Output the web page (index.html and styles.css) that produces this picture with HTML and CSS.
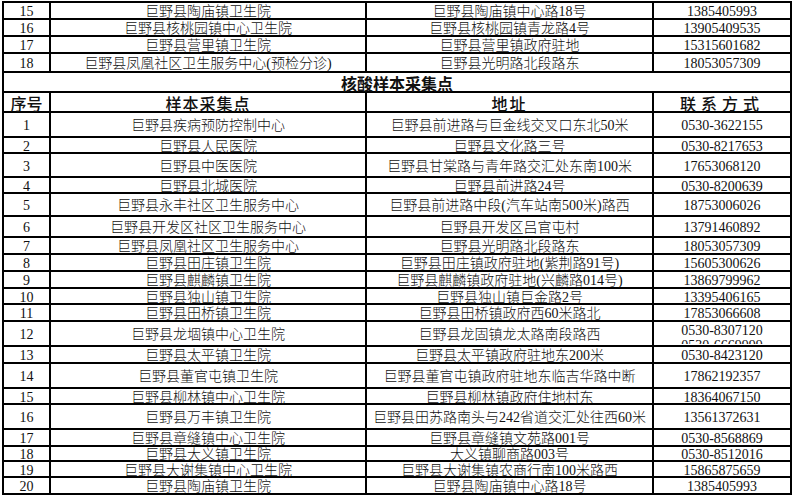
FILE: index.html
```html
<!DOCTYPE html>
<html lang="zh-CN">
<head>
<meta charset="utf-8">
<title>核酸样本采集点</title>
<link rel="stylesheet" href="styles.css">
</head>
<body>
<table class="sheet">
  <colgroup>
    <col class="c-no">
    <col class="c-name">
    <col class="c-addr">
    <col class="c-tel">
  </colgroup>
  <tbody>
    <tr class="h17"><td>15</td><td>巨野县陶庙镇卫生院</td><td>巨野县陶庙镇中心路18号</td><td>1385405993</td></tr>
    <tr class="h17"><td>16</td><td>巨野县核桃园镇中心卫生院</td><td>巨野县核桃园镇青龙路4号</td><td>13905409535</td></tr>
    <tr class="h17"><td>17</td><td>巨野县营里镇卫生院</td><td>巨野县营里镇政府驻地</td><td>15315601682</td></tr>
    <tr class="h19"><td>18</td><td>巨野县凤凰社区卫生服务中心(预检分诊)</td><td>巨野县光明路北段路东</td><td>18053057309</td></tr>
    <tr class="h20 title"><td colspan="4">核酸样本采集点</td></tr>
    <tr class="h20 head"><td>序号</td><td class="sp2">样本采集点</td><td class="sp3">地址</td><td class="sp4">联系方式</td></tr>
    <tr class="h25"><td>1</td><td>巨野县疾病预防控制中心</td><td>巨野县前进路与巨金线交叉口东北50米</td><td>0530-3622155</td></tr>
    <tr class="h16"><td>2</td><td>巨野县人民医院</td><td>巨野县文化路三号</td><td>0530-8217653</td></tr>
    <tr class="h24"><td>3</td><td>巨野县中医医院</td><td>巨野县甘棠路与青年路交汇处东南100米</td><td>17653068120</td></tr>
    <tr class="h16"><td>4</td><td>巨野县北城医院</td><td>巨野县前进路24号</td><td>0530-8200639</td></tr>
    <tr class="h23"><td>5</td><td>巨野县永丰社区卫生服务中心</td><td>巨野县前进路中段(汽车站南500米)路西</td><td>18753006026</td></tr>
    <tr class="h21"><td>6</td><td>巨野县开发区社区卫生服务中心</td><td>巨野县开发区吕官屯村</td><td>13791460892</td></tr>
    <tr class="h17"><td>7</td><td>巨野县凤凰社区卫生服务中心</td><td>巨野县光明路北段路东</td><td>18053057309</td></tr>
    <tr class="h17"><td>8</td><td>巨野县田庄镇卫生院</td><td>巨野县田庄镇政府驻地(紫荆路91号)</td><td>15605300626</td></tr>
    <tr class="h17"><td>9</td><td>巨野县麒麟镇卫生院</td><td>巨野县麒麟镇政府驻地(兴麟路014号)</td><td>13869799962</td></tr>
    <tr class="h16"><td>10</td><td>巨野县独山镇卫生院</td><td>巨野县独山镇巨金路2号</td><td>13395406165</td></tr>
    <tr class="h17"><td>11</td><td>巨野县田桥镇卫生院</td><td>巨野县田桥镇政府西60米路北</td><td>17853066608</td></tr>
    <tr class="h25"><td>12</td><td>巨野县龙堌镇中心卫生院</td><td>巨野县龙固镇龙太路南段路西</td><td class="multi"><div class="clip">0530-8307120<br>0530-6669999</div></td></tr>
    <tr class="h17"><td>13</td><td>巨野县太平镇卫生院</td><td>巨野县太平镇政府驻地东200米</td><td>0530-8423120</td></tr>
    <tr class="h25"><td>14</td><td>巨野县董官屯镇卫生院</td><td>巨野县董官屯镇政府驻地东临吉华路中断</td><td>17862192357</td></tr>
    <tr class="h16"><td>15</td><td>巨野县柳林镇中心卫生院</td><td>巨野县柳林镇政府住地村东</td><td>18364067150</td></tr>
    <tr class="h25"><td>16</td><td>巨野县万丰镇卫生院</td><td>巨野县田苏路南头与242省道交汇处往西60米</td><td>13561372631</td></tr>
    <tr class="h17"><td>17</td><td>巨野县章缝镇中心卫生院</td><td>巨野县章缝镇文苑路001号</td><td>0530-8568869</td></tr>
    <tr class="h15"><td>18</td><td>巨野县大义镇卫生院</td><td>大义镇聊商路003号</td><td>0530-8512016</td></tr>
    <tr class="h16"><td>19</td><td>巨野县大谢集镇中心卫生院</td><td>巨野县大谢集镇农商行南100米路西</td><td>15865875659</td></tr>
    <tr class="h17"><td>20</td><td>巨野县陶庙镇卫生院</td><td>巨野县陶庙镇中心路18号</td><td>1385405993</td></tr>
  </tbody>
</table>
</body>
</html>
```
FILE: styles.css
```css
html, body {
  margin: 0;
  padding: 0;
  background: #fff;
}
body {
  padding: 1px 0 0 2px;
  font-family: "Liberation Serif", "Noto Sans CJK SC", serif;
  color: #111;
}
.sheet {
  border-collapse: collapse;
  table-layout: fixed;
  width: 790px;
  border: 2px solid #000;
}
.c-no { width: 47px; }
.c-name { width: 316px; }
.c-addr { width: 287px; }
.c-tel { width: 138px; }

.sheet td {
  border: 2px solid #000;
  padding: 2px 0 0;
  font-size: 14px;
  font-weight: 300;
  line-height: 11px;
  text-align: center;
  vertical-align: middle;
  white-space: nowrap;
}
.h15 { height: 15px; }
.h16 { height: 16px; }
.h17 { height: 17px; }
.h19 { height: 19px; }
.h20 { height: 20px; }
.h21 { height: 21px; }
.h23 { height: 23px; }
.h24 { height: 24px; }
.h25 { height: 25px; }

.sheet .title td {
  font-size: 16px;
  font-weight: bold;
  font-family: "Noto Sans CJK SC", sans-serif;
  line-height: 16px;
  padding-top: 2px;
}
.sheet .head td {
  font-size: 16px;
  font-family: "Noto Sans CJK SC", sans-serif;
  font-weight: 500;
  line-height: 16px;
  padding-top: 2px;
}
.head .sp2 { letter-spacing: 1px; }
.head .sp3 { letter-spacing: 2px; }
.head .sp4 { letter-spacing: 5px; }

.sheet td.multi {
  vertical-align: top;
  padding: 0;
}
.clip {
  height: 21px;
  overflow: hidden;
  line-height: 15px;
  padding-top: 1px;
}
```
